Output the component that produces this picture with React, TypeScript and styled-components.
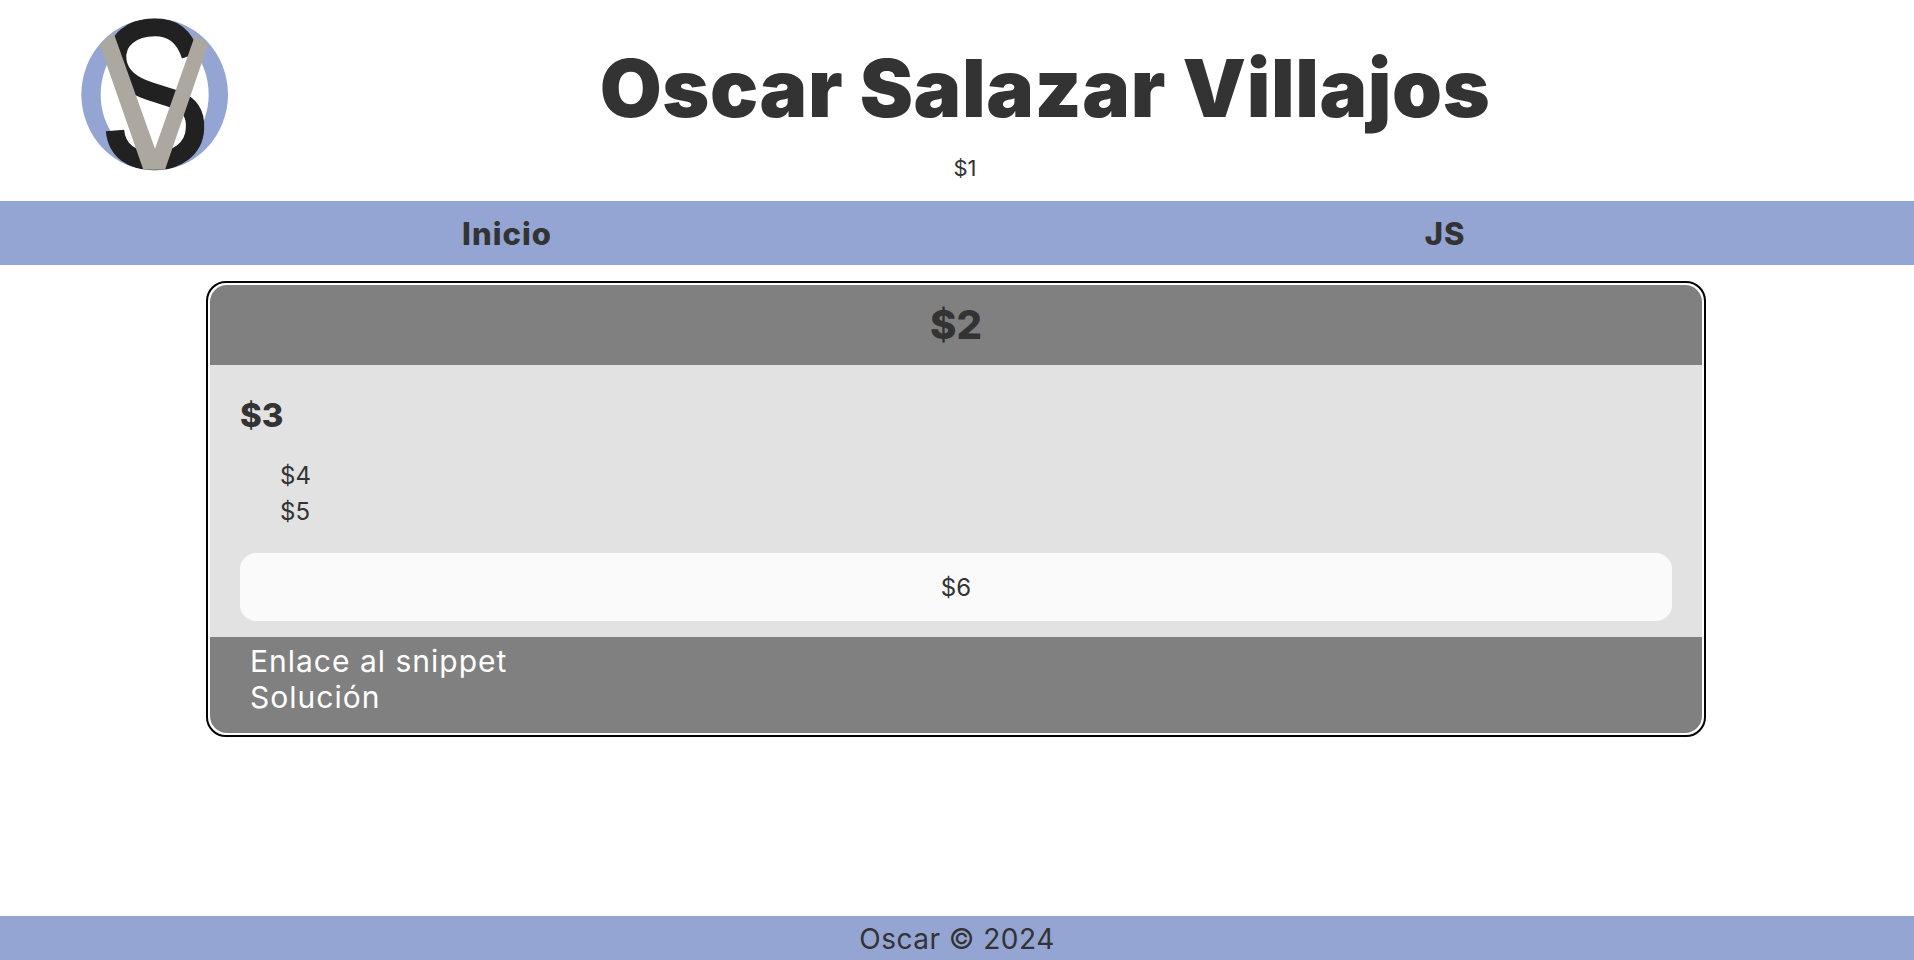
import React from 'react'
import styled, { createGlobalStyle } from 'styled-components'

const GlobalStyle = createGlobalStyle`
  html, body {
    margin: 0;
    padding: 0;
    background: #fff;
    color: #333;
    font-family: Inter, "Open Sans", sans-serif;
  }
`

const Page = styled.div`
  min-height: 960px;
  display: flex;
  flex-direction: column;
`

const Header = styled.header`
  height: 201px;
  box-sizing: border-box;
  padding: 17px 0 0 80px;
  display: grid;
  grid-template-columns: 148px 1fr;
  grid-template-rows: 124px auto;
`

const LogoMark = styled.svg`
  grid-row: 1 / 3;
  width: 150px;
  height: 157px;
  display: block;
`

const Title = styled.h1`
  margin: 0;
  padding: 18px 52px 0 0;
  text-align: center;
  font-size: 80px;
  line-height: 106px;
  font-weight: 900;
  letter-spacing: 0.6px;
`

const Subtitle = styled.p`
  margin: 13px 0 0;
  padding-right: 212px;
  text-align: center;
  font-size: 22px;
  line-height: 28px;
`

const Nav = styled.ul`
  margin: 0;
  padding: 0 0 0 38px;
  height: 64px;
  list-style: none;
  background: #94a5d4;
  display: grid;
  grid-template-columns: 1fr 1fr;
  align-items: center;
`

const NavItem = styled.li`
  text-align: center;
  font-size: 31px;
  font-weight: 800;
  letter-spacing: 1px;
`

const Main = styled.main`
  flex: 1;
  padding: 16px 2px 0 0;
`

const Card = styled.article`
  width: 1492px;
  margin: 0 auto;
  border: 2px solid #000;
  border-radius: 20px;
  padding: 2px;
  overflow: hidden;
`

const CardHeader = styled.h2`
  margin: 0;
  height: 80px;
  box-sizing: border-box;
  padding-bottom: 2px;
  background: #808080;
  border-radius: 17px 17px 0 0;
  display: flex;
  align-items: center;
  justify-content: center;
  font-size: 40px;
  font-weight: 800;
`

const CardBody = styled.div`
  background: #e2e2e2;
  height: 272px;
  box-sizing: border-box;
  padding: 28px 30px 16px;
  display: flex;
  flex-direction: column;
`

const Problem = styled.h3`
  margin: 0;
  font-size: 33px;
  line-height: 44px;
  font-weight: 800;
`

const Items = styled.ul`
  list-style: none;
  margin: 21px 0 0;
  padding: 0 0 0 40px;
  font-size: 24px;
  line-height: 36px;
`

const CodeBox = styled.div`
  margin-top: auto;
  height: 68px;
  background: #fafafa;
  border-radius: 16px;
  display: flex;
  align-items: center;
  justify-content: center;
  font-size: 24px;
`

const CardFooter = styled.div`
  background: #808080;
  border-radius: 0 0 17px 17px;
  height: 96px;
  box-sizing: border-box;
  padding: 6px 0 0 40px;
  display: flex;
  flex-direction: column;
`

const CardLink = styled.a`
  color: #fff;
  font-size: 30px;
  line-height: 36px;
  letter-spacing: 1px;
`

const Footer = styled.footer`
  height: 44px;
  box-sizing: border-box;
  padding-top: 2px;
  background: #94a5d4;
  text-align: center;
  font-size: 28px;
  line-height: 42px;
  letter-spacing: 0.5px;
`

const Logo = () => (
  <LogoMark viewBox="60 50 450 470" aria-label="Logo">
    <defs>
      <clipPath id="logo-clip">
        <ellipse cx="284" cy="282" rx="220" ry="228" />
      </clipPath>
    </defs>
    <path
      fillRule="evenodd"
      fill="#94a5d4"
      d="M64 282a220 228 0 1 0 440 0a220 228 0 1 0-440 0ZM122 282a162 190 0 1 1 324 0a162 190 0 1 1-324 0Z"
    />
    <g clipPath="url(#logo-clip)">
      <path
        fill="none"
        stroke="#212121"
        strokeWidth="55"
        d="M392 165C372 105 335 80 285 80C215 80 165 120 172 180C178 225 215 255 270 272L345 296C390 312 408 340 405 385C402 445 350 482 285 482C215 482 170 450 165 390"
      />
    </g>
    <polygon fill="#aca79f" points="120,135 160,95 285,445 405,105 445,130 315,508 250,508" />
  </LogoMark>
)

const App = () => (
  <Page>
    <GlobalStyle />
    <Header>
      <Logo />
      <Title>Oscar Salazar Villajos</Title>
      <Subtitle>$1</Subtitle>
    </Header>
    <Nav>
      <NavItem>Inicio</NavItem>
      <NavItem>JS</NavItem>
    </Nav>
    <Main>
      <Card>
        <CardHeader>$2</CardHeader>
        <CardBody>
          <Problem>$3</Problem>
          <Items>
            <li>$4</li>
            <li>$5</li>
          </Items>
          <CodeBox>$6</CodeBox>
        </CardBody>
        <CardFooter>
          <CardLink>Enlace al snippet</CardLink>
          <CardLink>Solución</CardLink>
        </CardFooter>
      </Card>
    </Main>
    <Footer>Oscar © 2024</Footer>
  </Page>
)

export default App
